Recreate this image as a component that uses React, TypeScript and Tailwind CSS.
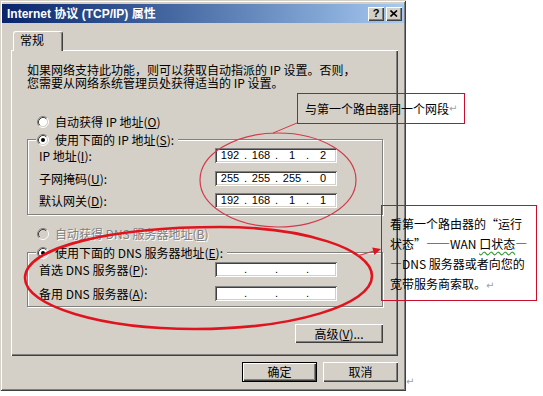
import React from "react";

function Radio({ checked = false, disabled = false }: { checked?: boolean; disabled?: boolean }) {
  return (
    <svg width="12" height="12" viewBox="0 0 12 12" className="shrink-0">
      <circle cx="6" cy="6" r="4.5" fill={disabled ? "#d4d0c8" : "#ffffff"} />
      <path d="M2.11 9.89 A5.5 5.5 0 0 1 9.89 2.11" stroke="#808080" strokeWidth="1" fill="none" />
      <path d="M9.89 2.11 A5.5 5.5 0 0 1 2.11 9.89" stroke="#ffffff" strokeWidth="1" fill="none" />
      <path d="M2.82 9.18 A4.5 4.5 0 0 1 9.18 2.82" stroke="#404040" strokeWidth="1" fill="none" />
      <path d="M9.18 2.82 A4.5 4.5 0 0 1 2.82 9.18" stroke="#d4d0c8" strokeWidth="1" fill="none" />
      {checked && <circle cx="6" cy="6" r="2" fill="#000000" />}
    </svg>
  );
}

function IpField({ parts }: { parts?: string[] }) {
  return (
    <div className="w-[122px] h-[15px] shrink-0 bg-white flex items-center pl-[3px] text-[11px] leading-none text-black font-['Liberation_Sans',sans-serif] shadow-[inset_1px_1px_#808080,inset_-1px_-1px_#ffffff,inset_2px_2px_#404040,inset_-2px_-2px_#d4d0c8]">
      {[0, 1, 2, 3].map((i) => (
        <React.Fragment key={i}>
          <span className="w-[24px] text-center">{parts ? parts[i] : ""}</span>
          {i < 3 && <span className="w-[7px] text-center">.</span>}
        </React.Fragment>
      ))}
    </div>
  );
}

function Row({ label, parts, className }: { label: React.ReactNode; parts?: string[]; className: string }) {
  return (
    <div className={"h-[15px] flex items-center justify-between pl-[11px] pr-[45px] " + className}>
      <span className="whitespace-nowrap leading-[14px]">{label}</span>
      <IpField parts={parts} />
    </div>
  );
}

export default function App() {
  return (
    <div
      lang="zh-CN"
      className="relative w-[543px] h-[396px] overflow-hidden bg-white text-black font-['Noto_Sans_CJK_SC','Noto_Sans',sans-serif]"
    >
      {/* Dialog */}
      <div className="w-[406px] h-[391px] bg-[#d4d0c8] pt-[4px] px-[2px] flex flex-col shadow-[inset_1px_1px_#d4d0c8,inset_-1px_-1px_#404040,inset_2px_2px_#ffffff,inset_-2px_-2px_#808080]">
        {/* Title bar */}
        <div className="h-[19px] flex items-center gap-[2px] bg-linear-to-r from-[#0a246a] to-[#a6caf0] pl-[5px] pr-[2px]">
          <span className="flex-1 whitespace-nowrap text-white font-bold text-[12px] leading-none font-['Liberation_Sans','Noto_Sans_CJK_SC',sans-serif]">
            Internet 协议 (TCP/IP) 属性
          </span>
          <div className="w-[16px] h-[14px] bg-[#d4d0c8] flex items-center justify-center text-[11px] font-bold leading-none font-['Liberation_Sans',sans-serif] shadow-[inset_1px_1px_#ffffff,inset_-1px_-1px_#404040,inset_-2px_-2px_#808080]">
            ?
          </div>
          <div className="w-[16px] h-[14px] bg-[#d4d0c8] flex items-center justify-center shadow-[inset_1px_1px_#ffffff,inset_-1px_-1px_#404040,inset_-2px_-2px_#808080]">
            <svg width="8" height="7" viewBox="0 0 8 7">
              <path d="M0.5 0.5 L7 6.5 M7 0.5 L0.5 6.5" stroke="#000" strokeWidth="1.6" />
            </svg>
          </div>
        </div>

        {/* Tab strip */}
        <div className="mt-[8px] pl-[11px] flex">
          <div className="relative z-10 w-[50px] h-[20px] -mb-[1px] bg-[#d4d0c8] rounded-t-[3px] border-t border-l border-r border-t-white border-l-white border-r-[#404040] shadow-[inset_-1px_0_#808080] pl-[6px] pt-[1px] text-[12px] leading-[14px]">
            常规
          </div>
        </div>

        {/* Panel */}
        <div className="ml-[9px] w-[387px] h-[306px] pt-[13px] pl-[16px] pr-[15px] flex flex-col text-[12px] shadow-[inset_1px_1px_#ffffff,inset_-1px_-1px_#404040,inset_-2px_-2px_#808080]">
          <p className="leading-[13px] whitespace-nowrap">
            如果网络支持此功能，则可以获取自动指派的 IP 设置。否则，
            <br />
            您需要从网络系统管理员处获得适当的 IP 设置。
          </p>

          <div className="mt-[26px] ml-[10px] h-[14px] flex items-center gap-[6px] whitespace-nowrap">
            <Radio />
            <span className="leading-[14px]">
              自动获得 IP 地址(<u className="underline-offset-1">O</u>)
            </span>
          </div>

          {/* Group 1 */}
          <div className="mt-[10px] h-[76px] border border-[#808080] shadow-[inset_1px_1px_#ffffff,1px_1px_#ffffff] flex flex-col">
            <div className="-mt-[7px] ml-[8px] self-start h-[14px] px-[1px] pr-[4px] bg-[#d4d0c8] flex items-center gap-[6px] whitespace-nowrap">
              <Radio checked />
              <span className="leading-[14px]">
                使用下面的 IP 地址(<u className="underline-offset-1">S</u>):
              </span>
            </div>
            <Row className="mt-[1px]" label={<>IP 地址(<u className="underline-offset-1">I</u>):</>} parts={["192", "168", "1", "2"]} />
            <Row className="mt-[8px]" label={<>子网掩码(<u className="underline-offset-1">U</u>):</>} parts={["255", "255", "255", "0"]} />
            <Row className="mt-[7px]" label={<>默认网关(<u className="underline-offset-1">D</u>):</>} parts={["192", "168", "1", "1"]} />
          </div>

          <div className="mt-[12px] ml-[10px] h-[14px] flex items-center gap-[6px] whitespace-nowrap">
            <Radio disabled />
            <span className="leading-[14px] text-[#808080] [text-shadow:1px_1px_0_#ffffff]">
              自动获得 DNS 服务器地址(<u className="underline-offset-1">B</u>)
            </span>
          </div>

          {/* Group 2 */}
          <div className="mt-[11px] h-[55px] border border-[#808080] shadow-[inset_1px_1px_#ffffff,1px_1px_#ffffff] flex flex-col">
            <div className="-mt-[7px] ml-[8px] self-start h-[14px] px-[1px] pr-[4px] bg-[#d4d0c8] flex items-center gap-[6px] whitespace-nowrap">
              <Radio checked />
              <span className="leading-[14px]">
                使用下面的 DNS 服务器地址(<u className="underline-offset-1">E</u>):
              </span>
            </div>
            <Row className="mt-[2px]" label={<>首选 DNS 服务器(<u className="underline-offset-1">P</u>):</>} />
            <Row className="mt-[9px]" label={<>备用 DNS 服务器(<u className="underline-offset-1">A</u>):</>} />
          </div>

          <div className="mt-[17px] self-end w-[88px] h-[19px] flex items-center justify-center whitespace-nowrap leading-none shadow-[inset_1px_1px_#ffffff,inset_-1px_-1px_#404040,inset_-2px_-2px_#808080]">
            高级(<u className="underline-offset-1">V</u>)...
          </div>
        </div>

        {/* Bottom buttons */}
        <div className="mt-[6px] ml-[9px] w-[387px] flex justify-end gap-[6px] text-[12px]">
          <div className="w-[75px] h-[20px] border border-black flex items-center justify-center leading-none shadow-[inset_1px_1px_#ffffff,inset_-1px_-1px_#404040,inset_-2px_-2px_#808080]">
            确定
          </div>
          <div className="w-[75px] h-[20px] flex items-center justify-center leading-none shadow-[inset_1px_1px_#ffffff,inset_-1px_-1px_#404040,inset_-2px_-2px_#808080]">
            取消
          </div>
        </div>
      </div>

      {/* Annotation drawings */}
      <svg className="absolute left-0 top-0 pointer-events-none" width="543" height="396" viewBox="0 0 543 396">
        <ellipse cx="278" cy="180" rx="78" ry="47" fill="none" stroke="#d23a4a" strokeWidth="1.2" />
        <path d="M297 123 L273 133" stroke="#d23a4a" strokeWidth="1" />
        <path
          d="M25 278 C25 247 112 227 220 227 C304 227 372 249 372 276 C372 305 293 329 195 329 C101 329 25 306 25 278 Z"
          fill="none"
          stroke="#e0141e"
          strokeWidth="2.6"
        />
        <path d="M357 256 L374 251" stroke="#d23a4a" strokeWidth="1.2" />
        <path d="M381 249 L374.4 255 L372.2 247.4 Z" fill="#e0141e" />
      </svg>

      {/* Annotation box 1 */}
      <div className="absolute left-[297px] top-[93px] w-[168px] h-[31px] border border-[#c8102e] flex items-center pl-[7px] text-[12px] leading-none whitespace-nowrap">
        与第一个路由器同一个网段<span className="text-[10px] text-[#a0a0a0] font-['DejaVu_Sans',sans-serif]">↵</span>
      </div>

      {/* Annotation box 2 */}
      <div className="absolute left-[381px] top-[205px] w-[156px] h-[96px] border border-[#c8102e] pt-[8px] pl-[8px] text-[12px] leading-[20px] whitespace-nowrap">
        看第一个路由器的“运行
        <br />
        状态”——WAN <span className="underline decoration-wavy decoration-[#3a9a3a] underline-offset-2">口状态</span>—
        <br />
        —DNS 服务器或者向您的
        <br />
        宽带服务商索取。<span className="text-[10px] text-[#a0a0a0] font-['DejaVu_Sans',sans-serif]">↵</span>
      </div>

      {/* Paragraph mark after the dialog */}
      <div className="absolute left-[406px] top-[377px] text-[10px] leading-none text-[#a0a0a0] font-['DejaVu_Sans',sans-serif]">
        ↵
      </div>
    </div>
  );
}
